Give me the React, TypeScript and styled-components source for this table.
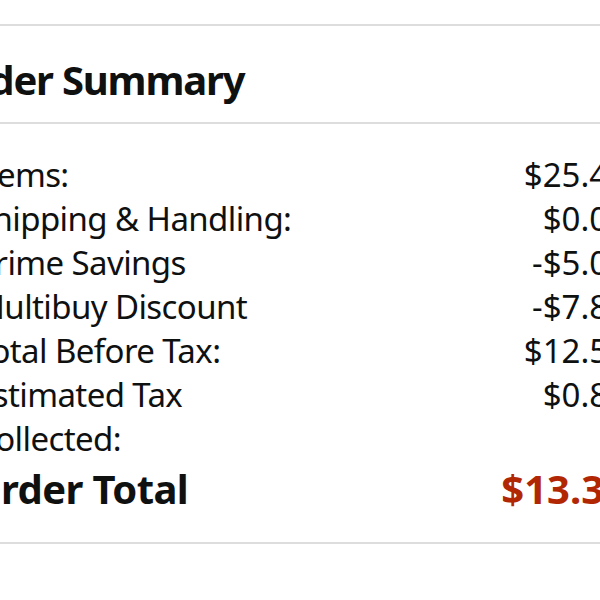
import React from "react";
import styled, { createGlobalStyle } from "styled-components";

const GlobalStyle = createGlobalStyle`
  html, body {
    margin: 0;
    padding: 0;
    background: #ffffff;
  }
  body {
    font-family: "Noto Sans", "Open Sans", Arial, sans-serif;
    color: #0f1111;
  }
`;

const Viewport = styled.div`
  width: 600px;
  height: 600px;
  overflow: hidden;
  background: #ffffff;
  padding-top: 24px;
  box-sizing: border-box;
`;

const Card = styled.section`
  margin-left: -25px;
  width: 652px;
  border-top: 2px solid #dddddd;
  border-bottom: 2px solid #dddddd;
`;

const Header = styled.header`
  padding: 30px 0 18px;
  border-bottom: 2px solid #dddddd;
`;

const Title = styled.h2`
  margin: 0 0 0 -32px;
  font-size: 40px;
  line-height: 48px;
  font-weight: 700;
  letter-spacing: -1.2px;
  white-space: nowrap;
`;

const Body = styled.div`
  padding: 29px 0 29px;
`;

const Row = styled.div`
  display: flex;
  justify-content: space-between;
  align-items: flex-start;
  font-size: 33px;
  line-height: 44px;
`;

const Label = styled.span`
  max-width: 335px;
  letter-spacing: -0.6px;
`;

const Amount = styled.span`
  text-align: right;
  white-space: nowrap;
`;

const TotalRow = styled(Row)`
  margin-top: 4px;
  font-size: 40px;
  line-height: 48px;
  font-weight: 700;
`;

const TotalLabel = styled.span`
  margin-left: -5px;
  letter-spacing: -0.6px;
  white-space: nowrap;
`;

const TotalAmount = styled(Amount)`
  color: #b12704;
`;

type Line = { label: string; amount: string };

const lines: Line[] = [
  { label: "Items:", amount: "$25.44" },
  { label: "Shipping & Handling:", amount: "$0.00" },
  { label: "Prime Savings", amount: "-$5.00" },
  { label: "Multibuy Discount", amount: "-$7.89" },
  { label: "Total Before Tax:", amount: "$12.55" },
  { label: "Estimated Tax Collected:", amount: "$0.83" },
];

export default function App() {
  return (
    <Viewport>
      <GlobalStyle />
      <Card>
        <Header>
          <Title>Order Summary</Title>
        </Header>
        <Body>
          {lines.map((line) => (
            <Row key={line.label}>
              <Label>{line.label}</Label>
              <Amount>{line.amount}</Amount>
            </Row>
          ))}
          <TotalRow>
            <TotalLabel>Order Total</TotalLabel>
            <TotalAmount>$13.38</TotalAmount>
          </TotalRow>
        </Body>
      </Card>
    </Viewport>
  );
}
